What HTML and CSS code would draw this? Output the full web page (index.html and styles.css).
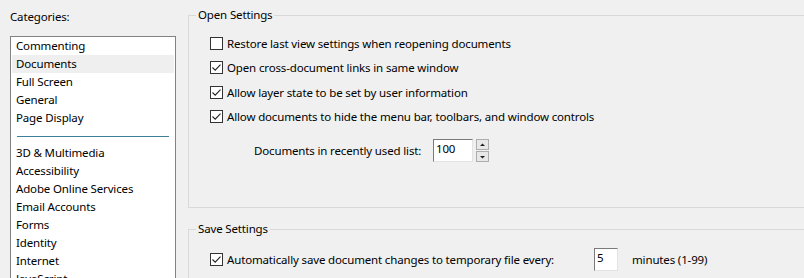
FILE: index.html
```html
<!DOCTYPE html>
<html>
<head>
<meta charset="utf-8">
<link rel="stylesheet" href="styles.css">
</head>
<body>
<div class="page">
  <div class="left">
    <div class="cat-label">Categories:</div>
    <div class="list">
      <div class="item">Commenting</div>
      <div class="item selected">Documents</div>
      <div class="item">Full Screen</div>
      <div class="item">General</div>
      <div class="item">Page Display</div>
      <div class="sep"><div class="sep-line"></div></div>
      <div class="item">3D &amp; Multimedia</div>
      <div class="item">Accessibility</div>
      <div class="item">Adobe Online Services</div>
      <div class="item">Email Accounts</div>
      <div class="item">Forms</div>
      <div class="item">Identity</div>
      <div class="item">Internet</div>
      <div class="item">JavaScript</div>
    </div>
  </div>
  <div class="right">
    <div class="group open">
      <div class="group-title">Open Settings</div>
      <div class="rows">
        <div class="row"><span class="cb"></span><span>Restore last view settings when reopening documents</span></div>
        <div class="row"><span class="cb"><svg viewBox="0 0 13 13" width="13" height="13"><polyline points="2.5,6.5 5.2,9.2 10.5,3.6" fill="none" stroke="#222" stroke-width="1.1"/></svg></span><span>Open cross-document links in same window</span></div>
        <div class="row"><span class="cb"><svg viewBox="0 0 13 13" width="13" height="13"><polyline points="2.5,6.5 5.2,9.2 10.5,3.6" fill="none" stroke="#222" stroke-width="1.1"/></svg></span><span>Allow layer state to be set by user information</span></div>
        <div class="row"><span class="cb"><svg viewBox="0 0 13 13" width="13" height="13"><polyline points="2.5,6.5 5.2,9.2 10.5,3.6" fill="none" stroke="#222" stroke-width="1.1"/></svg></span><span>Allow documents to hide the menu bar, toolbars, and window controls</span></div>
        <div class="recent">
          <span class="recent-label">Documents in recently used list:</span>
          <span class="field wide">100</span>
          <span class="spin">
            <span class="spin-btn"><svg viewBox="0 0 11 10" width="11" height="10"><polygon points="3,6 8,6 5.5,3.5" fill="#222"/></svg></span>
            <span class="spin-btn"><svg viewBox="0 0 11 10" width="11" height="10"><polygon points="3,4 8,4 5.5,6.5" fill="#222"/></svg></span>
          </span>
        </div>
      </div>
    </div>
    <div class="group save">
      <div class="group-title">Save Settings</div>
      <div class="rows">
        <div class="row save-row"><span class="cb"><svg viewBox="0 0 13 13" width="13" height="13"><polyline points="2.5,6.5 5.2,9.2 10.5,3.6" fill="none" stroke="#222" stroke-width="1.1"/></svg></span><span class="save-text">Automatically save document changes to temporary file every:</span><span class="field narrow">5</span><span class="minutes">minutes (1-99)</span></div>
      </div>
    </div>
  </div>
</div>
</body>
</html>
```
FILE: styles.css
```css
html, body {
  margin: 0;
  padding: 0;
  background: #f0f0f0;
  overflow: hidden;
}
body {
  font-family: "Noto Sans", "Open Sans", sans-serif;
  font-size: 11.5px;
  letter-spacing: -0.15px;
  color: #000;
}
.page {
  display: flex;
  width: 804px;
  height: 278px;
  overflow: hidden;
}
.left {
  width: 166px;
  margin-left: 10px;
  flex: none;
}
.cat-label {
  height: 16px;
  line-height: 16px;
  margin-top: 9px;
  margin-bottom: 11px;
}
.list {
  background: #fff;
  border: 1px solid #828282;
  padding: 0 1px;
  height: 400px;
}
.item {
  height: 18px;
  line-height: 18px;
  padding-left: 4px;
  white-space: nowrap;
}
.item.selected {
  background: #efefef;
}
.sep {
  height: 17px;
  display: flex;
  align-items: center;
  padding-left: 5px;
  padding-right: 5px;
}
.sep-line {
  flex: 1;
  height: 1px;
  background: #3e7f98;
  margin-top: 1px;
}
.right {
  margin-left: 12px;
  flex: 1;
  padding-top: 15px;
}
.group {
  border: 1px solid #d9d9d9;
  border-right: none;
  margin-right: -20px;
}
.group.open {
  height: 191px;
}
.group.save {
  margin-top: 21px;
  height: 100px;
}
.group-title {
  display: block;
  width: max-content;
  margin-top: -9px;
  margin-left: 7px;
  padding: 0 2px;
  background: #f0f0f0;
  line-height: 16px;
  height: 16px;
}
.rows {
  padding-left: 21px;
}
.open .rows {
  padding-top: 8px;
}
.row {
  display: flex;
  align-items: center;
  height: 24.5px;
  white-space: nowrap;
}
.cb {
  width: 11px;
  height: 11px;
  border: 1px solid #333;
  background: #fff;
  margin-right: 4px;
  flex: none;
}
.cb svg {
  display: block;
  margin: -1px;
}
.recent {
  display: flex;
  align-items: center;
  margin-top: 10px;
  margin-left: 44px;
  height: 23px;
}
.recent-label {
  width: 179px;
}
.field {
  box-sizing: border-box;
  height: 23px;
  background: #fff;
  border-top: 1px solid #7a7a7a;
  border-left: 1px solid #7a7a7a;
  border-right: 1px solid #e3e3e3;
  border-bottom: 1px solid #e3e3e3;
  line-height: 18px;
  padding-left: 2px;
}
.field.wide {
  width: 40px;
}
.field.narrow {
  width: 24px;
}
.spin {
  display: flex;
  flex-direction: column;
  margin-left: 3px;
  gap: 1px;
}
.spin-btn {
  box-sizing: border-box;
  width: 13px;
  height: 11px;
  background: #e8e8e8;
  border: 1px solid #adadad;
  display: flex;
  align-items: center;
  justify-content: center;
}
.save .rows {
  padding-top: 11px;
}
.save-row {
  height: 23px;
}
.save-text {
  width: 367px;
}
.minutes {
  margin-left: 14px;
}
```
